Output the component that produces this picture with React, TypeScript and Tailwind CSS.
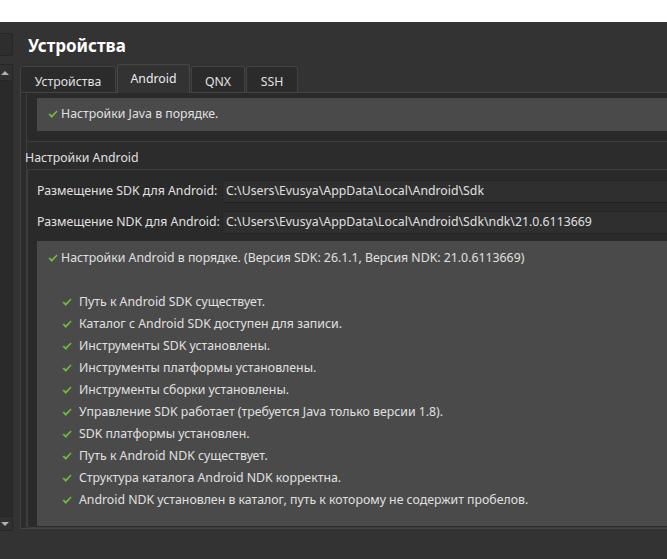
import React from 'react';

const font = { fontFamily: '"Noto Sans", "Open Sans", sans-serif' };

function Check({ className = '' }: { className?: string }) {
  return (
    <svg width="10" height="9" viewBox="0 0 10 9" className={className}>
      <path d="M0.5 4.6 L2 3.4 L3.7 5.3 L8.6 0.6 L9.6 1.6 L3.8 7.9 Z" fill="#6cbb3c" />
    </svg>
  );
}

const items = [
  'Путь к Android SDK существует.',
  'Каталог с Android SDK доступен для записи.',
  'Инструменты SDK установлены.',
  'Инструменты платформы установлены.',
  'Инструменты сборки установлены.',
  'Управление SDK работает (требуется Java только версии 1.8).',
  'SDK платформы установлен.',
  'Путь к Android NDK существует.',
  'Структура каталога Android NDK корректна.',
  'Android NDK установлен в каталог, путь к которому не содержит пробелов.',
];

const tabs = [
  { label: 'Устройства', w: 'w-[96px]', active: false },
  { label: 'Android', w: 'w-[73px]', active: true },
  { label: 'QNX', w: 'w-[54px]', active: false },
  { label: 'SSH', w: 'w-[52px]', active: false },
];

export default function App() {
  return (
    <div className="w-[667px] h-[559px] overflow-hidden bg-white flex flex-col text-[12.3px] text-[#e0e0e0]" style={font}>
      <div className="h-[22px] shrink-0 bg-white" />
      <div className="flex-1 bg-[#333333] flex min-h-0">
        {/* left list scrollbar */}
        <div className="w-[13px] shrink-0 flex flex-col pt-[11px]">
          <div className="h-[23px] bg-[#2e2e2e] border border-l-0 border-[#262626] rounded-r-[3px]" />
          <div className="mt-[8px] h-[467px] bg-[#2a2a2a] border border-l-0 border-[#262626] flex flex-col">
            <div className="h-[16px] border-b border-[#262626] bg-[#303030] flex items-center justify-center pr-[2px]">
              <div className="w-0 h-0 border-l-[4px] border-r-[4px] border-b-[4px] border-l-transparent border-r-transparent border-b-[#b0b0b0]" />
            </div>
            <div className="flex-1" />
            <div className="h-[14px] border-t border-[#262626] bg-[#303030] flex items-center justify-center pr-[2px]">
              <div className="w-0 h-0 border-l-[4px] border-r-[4px] border-t-[4px] border-l-transparent border-r-transparent border-t-[#b0b0b0]" />
            </div>
          </div>
        </div>

        {/* main */}
        <div className="w-[700px] shrink-0 pl-[7px] flex flex-col">
          <div className="pl-[8px] pt-[14px] h-[41px] text-[17px] leading-[20px] font-bold text-white">Устройства</div>
          <div className="flex items-end h-[29px] gap-[1px]">
            {tabs.map((t) =>
              t.active ? (
                <div key={t.label} className={`${t.w} h-[29px] bg-[#333333] border border-b-0 border-[#474747] rounded-t-[3px] flex justify-center pt-[5px] text-[#ececec] relative top-[1px]`}>
                  {t.label}
                </div>
              ) : (
                <div key={t.label} className={`${t.w} h-[26px] bg-[#2b2b2b] border border-b-0 border-[#424242] rounded-t-[3px] flex justify-center pt-[6px]`}>
                  {t.label}
                </div>
              )
            )}
          </div>
          {/* tab pane */}
          <div className="h-[437px] border border-[#434343] border-r-0 bg-[#2c2c2c] pl-[5px] flex flex-col shadow-[inset_0_1px_0_#242424]">
            <div className="flex-1 border-l border-[#3d3d3d] flex flex-col">
              {/* Java group */}
              <div className="h-[49px] border-b border-[#3f3f3f] rounded-bl-[3px] bg-[#2a2a2a] pl-[10px] pt-[5px]">
                <div className="h-[33px] bg-[#4a4a4a] flex items-center gap-[3px] pl-[11px]">
                  <Check />
                  <span>Настройки Java в порядке.</span>
                </div>
              </div>
              <div className="h-[27px] flex items-center -ml-[2px] pt-[5px]">Настройки Android</div>
              {/* Android group */}
              <div className="h-[359px] border border-r-0 border-[#3f3f3f] rounded-l-[3px] bg-[#2a2a2a] pl-[9px] pt-[10px] flex flex-col">
                <div className="flex items-center h-[23px]">
                  <div className="w-[185px] shrink-0">Размещение SDK для Android:</div>
                  <div className="flex-1 h-[23px] bg-[#2f2f2f] border border-[#232323] flex items-center pl-[3px]">C:\Users\Evusya\AppData\Local\Android\Sdk</div>
                </div>
                <div className="flex items-center h-[23px] mt-[8px]">
                  <div className="w-[185px] shrink-0">Размещение NDK для Android:</div>
                  <div className="flex-1 h-[23px] bg-[#2f2f2f] border border-[#232323] flex items-center pl-[3px]">C:\Users\Evusya\AppData\Local\Android\Sdk\ndk\21.0.6113669</div>
                </div>
                <div className="mt-[7px] h-[285px] bg-[#4a4a4a] pt-[6px]">
                  <div className="h-[22px] flex items-center gap-[3px] pl-[11px]">
                    <Check />
                    <span>Настройки Android в порядке. (Версия SDK: 26.1.1, Версия NDK: 21.0.6113669)</span>
                  </div>
                  <div className="h-[22px]" />
                  {items.map((it) => (
                    <div key={it} className="h-[22px] flex items-center pl-[25px]">
                      <Check className="mr-[7px]" />
                      <span>{it}</span>
                    </div>
                  ))}
                </div>
              </div>
            </div>
          </div>
        </div>
      </div>
    </div>
  );
}
